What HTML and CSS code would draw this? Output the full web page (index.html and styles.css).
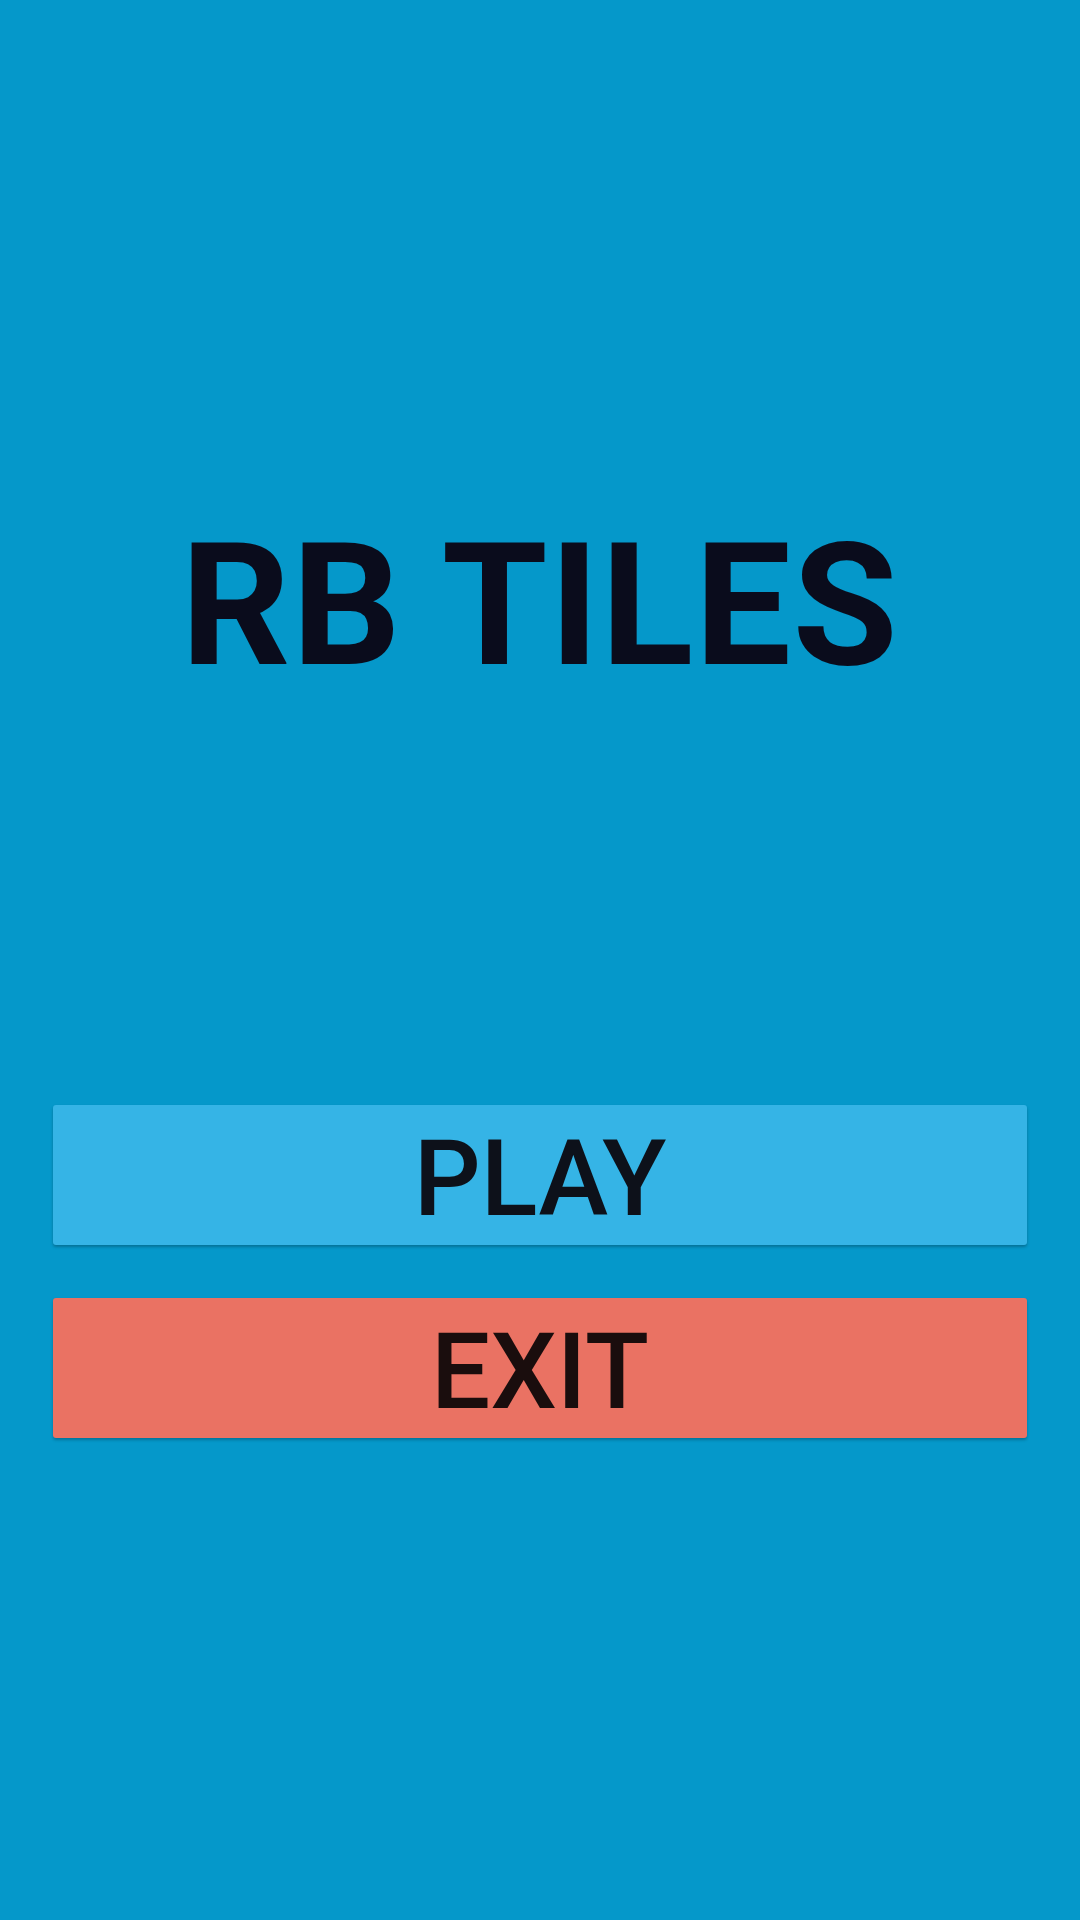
FILE: index.html
```html
<!DOCTYPE html>
<html>
<head>
<meta charset="utf-8">
<link rel="stylesheet" href="styles.css">
</head>
<body>
<main class="screen">
  <h1 class="title">RB TILES</h1>
  <div class="actions">
    <button class="btn btn-play">PLAY</button>
    <button class="btn btn-exit">EXIT</button>
  </div>
</main>
</body>
</html>
```
FILE: styles.css
```css
html, body {
  margin: 0;
  padding: 0;
  width: 1080px;
  height: 1920px;
  background: #0598ca;
  overflow: hidden;
}
.screen {
  display: flex;
  flex-direction: column;
  padding: 520px 53px 0;
  font-family: Roboto, "Liberation Sans", sans-serif;
}
.title {
  margin: 0;
  font-size: 171px;
  line-height: 1;
  font-weight: 700;
  text-align: center;
  color: #0a0c1c;
  letter-spacing: 1.5px;
}
.actions {
  margin-top: 414px;
  display: flex;
  flex-direction: column;
  gap: 53px;
}
.btn {
  height: 140px;
  border: none;
  border-radius: 3px;
  font-family: Roboto, "Liberation Sans", sans-serif;
  font-size: 105px;
  font-weight: 500;
  color: #0d111a;
  display: flex;
  align-items: center;
  justify-content: center;
  padding: 8px 0 0;
  box-shadow: 0 2px 3px rgba(0, 0, 0, 0.25);
}
.btn-play {
  background: #35b4e6;
}
.btn-exit {
  background: #ea7263;
  color: #1a0d0d;
}
```
